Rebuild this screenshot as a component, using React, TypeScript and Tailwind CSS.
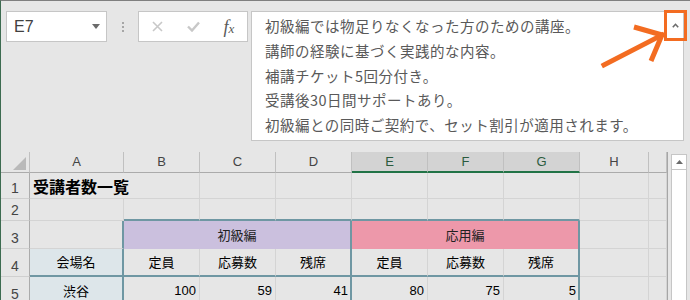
import React from 'react';

const jp = { fontFamily: '"Noto Sans CJK JP", "Noto Sans", sans-serif' };
const latin = { fontFamily: '"Liberation Sans", Arial, sans-serif' };

const lines = [
  '初級編では物足りなくなった方のための講座。',
  '講師の経験に基づく実践的な内容。',
  '補講チケット5回分付き。',
  '受講後30日間サポートあり。',
  '初級編との同時ご契約で、セット割引が適用されます。',
];

const cols = ['A', 'B', 'C', 'D', 'E', 'F', 'G', 'H', ''];

// normal cell gridlines
const g = 'border-r border-b border-[#d4d4d4]';

const App: React.FC = () => {
  return (
    <div className="w-[690px] h-[300px] overflow-hidden bg-[#e6e6e6] border-t border-t-[#7f7f7f] border-l border-l-[#3d6b50] flex flex-col">
      {/* Formula bar area */}
      <div className="flex items-start pt-[10px] pl-[5px] h-[151px] shrink-0">
        {/* Name box */}
        <div className="w-[101px] h-[31px] bg-white border border-[#c6c6c6] flex items-center justify-between pl-[7px] pr-[6px]">
          <span className="text-[16px] text-[#404040]" style={latin}>E7</span>
          <svg width="8" height="5" viewBox="0 0 8 5"><path d="M0 0h8L4 5z" fill="#6b6b6b" /></svg>
        </div>
        {/* Grip dots */}
        <div className="w-[31px] h-[31px] flex flex-col items-center justify-center gap-[2px]">
          <span className="w-[2px] h-[2px] bg-[#a6a6a6]" />
          <span className="w-[2px] h-[2px] bg-[#a6a6a6]" />
          <span className="w-[2px] h-[2px] bg-[#a6a6a6]" />
        </div>
        {/* Cancel / enter / fx */}
        <div className="w-[110px] h-[31px] bg-white border border-[#c6c6c6] flex items-center">
          <div className="w-[36px] flex justify-center pl-[1px]">
            <svg width="11" height="11" viewBox="0 0 11 11"><path d="M1 1l9 9M10 1l-9 9" stroke="#c8c8c8" strokeWidth="1.6" /></svg>
          </div>
          <div className="w-[36px] flex justify-center">
            <svg width="13" height="11" viewBox="0 0 13 11"><path d="M1 5.5l4 4L12 1.5" stroke="#c8c8c8" strokeWidth="2.4" fill="none" /></svg>
          </div>
          <div className="w-[36px] flex justify-center">
            <span className="text-[18px] italic text-[#595959] leading-none" style={{ fontFamily: '"Liberation Serif", serif' }}>
              f<span className="text-[13px]">x</span>
            </span>
          </div>
        </div>
        {/* Expanded formula box */}
        <div className="relative ml-[3px] w-[433px] h-[130px] bg-white border border-[#c6c6c6] pl-[13px] pt-[2px]">
          {lines.map((line, i) => (
            <div key={i} className="text-[14.5px] leading-[24.75px] tracking-[0.5px] text-[#595959] whitespace-nowrap" style={jp}>
              {line}
            </div>
          ))}
          {/* collapse button highlighted */}
          <div className="absolute top-[-2px] right-[-4px] w-[23px] h-[31px] border-[3px] border-[#f36c21] flex items-center justify-center">
            <svg width="7" height="5" viewBox="0 0 7 5"><path d="M0.8 4.2L3.5 1.3l2.7 2.9" stroke="#6b6b6b" strokeWidth="1.6" fill="none" /></svg>
          </div>
          {/* arrow annotation */}
          <svg className="absolute left-[346px] top-[10px]" width="70" height="48" viewBox="0 0 70 48">
            <path d="M6 43L64 13" stroke="#f36c21" strokeWidth="5" strokeLinecap="square" />
            <path d="M36 5L64 13L53 39" stroke="#f36c21" strokeWidth="5" fill="none" strokeLinejoin="miter" />
          </svg>
        </div>
      </div>

      {/* Sheet grid */}
      <div className="flex">
        <div className="grid grid-cols-[29px_94px_76px_76px_76px_76px_76px_76px_69px_18px] grid-rows-[21px_26px_22px_28px_28px_28px] text-[#000]">
          {/* column headers */}
          <div className="relative bg-[#e6e6e6] border-r border-r-[#c0c0c0] border-b border-b-[#ababab]">
            <svg className="absolute right-[3px] bottom-[2px]" width="13" height="13" viewBox="0 0 13 13"><path d="M13 0V13H0z" fill="#b9b9b9" /></svg>
          </div>
          {cols.map((c, i) => {
            const sel = c === 'E' || c === 'F' || c === 'G';
            return (
              <div
                key={i}
                className={
                  sel
                    ? 'bg-[#d3d3d3] border-r border-r-[#c0c0c0] border-b-2 border-b-[#217346] flex items-center justify-center text-[13px] text-[#2b5b3e]'
                    : 'bg-[#e6e6e6] border-r border-r-[#c0c0c0] border-b border-b-[#ababab] flex items-center justify-center text-[13px] text-[#444]'
                }
                style={latin}
              >
                {c}
              </div>
            );
          })}

          {/* row 1 */}
          <RowHead n="1" />
          <div className="relative border-b border-[#d4d4d4] flex items-center pl-[3px] whitespace-nowrap overflow-visible z-10">
            <span className="text-[16px] font-bold leading-none" style={jp}>受講者数一覧</span>
          </div>
          <div className={g} /><div className={g} /><div className={g} /><div className={g} /><div className={g} /><div className={g} /><div className={g} /><div className={g} />

          {/* row 2 */}
          <RowHead n="2" />
          <div className={g} />
          <div className="border-r border-r-[#d4d4d4] border-b-2 border-b-[#6f97a3]" />
          <div className="border-r border-r-[#d4d4d4] border-b-2 border-b-[#6f97a3]" />
          <div className="border-r border-r-[#d4d4d4] border-b-2 border-b-[#6f97a3]" />
          <div className="border-r border-r-[#d4d4d4] border-b-2 border-b-[#6f97a3]" />
          <div className="border-r border-r-[#d4d4d4] border-b-2 border-b-[#6f97a3]" />
          <div className="border-r border-r-[#d4d4d4] border-b-2 border-b-[#6f97a3]" />
          <div className={g} /><div className={g} />

          {/* row 3 */}
          <RowHead n="3" />
          <div className="border-r-2 border-r-[#6f97a3] border-b border-b-[#d4d4d4]" />
          <div className="col-span-3 bg-[#cbc0de] border-r-2 border-r-[#6f97a3] flex items-center justify-center text-[13px] text-[#222]" style={jp}>初級編</div>
          <div className="col-span-3 bg-[#ed98aa] border-r-2 border-r-[#6f97a3] flex items-center justify-center text-[13px] text-[#222]" style={jp}>応用編</div>
          <div className={g} /><div className={g} />

          {/* row 4 */}
          <RowHead n="4" />
          <div className="bg-[#dde6ea] border-r-2 border-r-[#6f97a3] border-b-2 border-b-[#6f97a3] flex items-center justify-center text-[13px]" style={jp}>会場名</div>
          <Sub text="定員" />
          <Sub text="応募数" />
          <Sub text="残席" edge />
          <Sub text="定員" />
          <Sub text="応募数" />
          <Sub text="残席" edge />
          <div className={g} /><div className={g} />

          {/* row 5 */}
          <RowHead n="5" />
          <div className="bg-[#dde6ea] border-r-2 border-r-[#6f97a3] flex items-center justify-center text-[13px]" style={jp}>渋谷</div>
          <Num v="100" />
          <Num v="59" />
          <Num v="41" edge />
          <Num v="80" />
          <Num v="75" />
          <Num v="5" edge />
          <div className={g} /><div className={g} />
        </div>

        {/* vertical scrollbar */}
        <div className="w-[23px] border-l border-l-[#a6a6a6] pl-[3px] pt-[2px]">
          <div className="w-[16px] h-[200px] bg-white border border-[#c6c6c6]">
            <div className="h-[15px] border-b border-[#c6c6c6] flex items-center justify-center">
              <svg width="7" height="4" viewBox="0 0 7 4"><path d="M0 4L3.5 0L7 4z" fill="#6b6b6b" /></svg>
            </div>
          </div>
        </div>
      </div>
    </div>
  );
};

const RowHead: React.FC<{ n: string }> = ({ n }) => (
  <div className="bg-[#e6e6e6] border-r border-r-[#ababab] border-b border-b-[#cfcfcf] flex items-end justify-center pb-[3px] text-[14px] text-[#444] leading-none" style={latin}>
    {n}
  </div>
);

const Sub: React.FC<{ text: string; edge?: boolean }> = ({ text, edge }) => (
  <div
    className={
      edge
        ? 'border-r-2 border-r-[#6f97a3] border-b-2 border-b-[#6f97a3] flex items-center justify-center text-[13px]'
        : 'border-r border-r-[#d4d4d4] border-b-2 border-b-[#6f97a3] flex items-center justify-center text-[13px]'
    }
    style={jp}
  >
    {text}
  </div>
);

const Num: React.FC<{ v: string; edge?: boolean }> = ({ v, edge }) => (
  <div
    className={
      edge
        ? 'border-r-2 border-r-[#6f97a3] border-b border-b-[#d4d4d4] flex items-center justify-end pr-[2px] text-[13px]'
        : 'border-r border-r-[#d4d4d4] border-b border-b-[#d4d4d4] flex items-center justify-end pr-[3px] text-[13px]'
    }
    style={latin}
  >
    {v}
  </div>
);

export default App;
